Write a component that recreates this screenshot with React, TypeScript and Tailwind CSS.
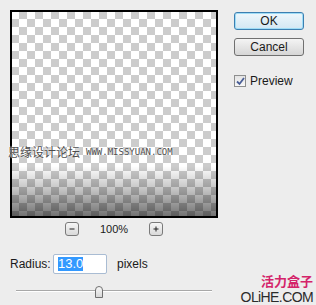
import React from "react";

const ui = { fontFamily: '"Liberation Sans", Arial, sans-serif' };

function SmallButton({ sign }: { sign: "-" | "+" }) {
    return (
        <div className="flex items-center justify-center w-[14px] h-[14px] rounded-[3px] border border-[#7a7a7a] bg-gradient-to-b from-[#f6f6f6] to-[#d9d9d9]">
            <svg width="8" height="8" viewBox="0 0 8 8" aria-hidden="true">
                <path d="M1.5 4h5" stroke="#222" strokeWidth="1" />
                {sign === "+" && <path d="M4 1.5v5" stroke="#222" strokeWidth="1" />}
            </svg>
        </div>
    );
}

export default function App() {
    return (
        <div className="relative w-[316px] h-[305px] overflow-hidden bg-[#ededed] text-[#1a1a1a]" style={ui}>
            <div className="flex">
                {/* left column */}
                <div className="flex flex-col pl-[10px] pt-[10px]">
                    <div className="relative w-[208px] h-[208px] border-2 border-black bg-white bg-[conic-gradient(#cccccc_25%,#ffffff_0_50%,#cccccc_0_75%,#ffffff_0)] bg-[length:16px_16px] bg-[position:-1px_-1px]">
                        <div className="absolute inset-x-0 bottom-0 h-[50px] bg-gradient-to-b from-transparent via-black/25 to-black/55" />
                    </div>

                    <div className="flex w-[208px] items-center justify-center gap-[21px] mt-[4px] h-[14px]">
                        <SmallButton sign="-" />
                        <span className="text-[11px] leading-none">100%</span>
                        <SmallButton sign="+" />
                    </div>

                    <div className="flex items-center h-[20px] mt-[18px]">
                        <span className="text-[12px] w-[43px]">Radius:</span>
                        <div className="flex items-center w-[54px] h-[20px] rounded-[2px] border border-[#a9bcd3] bg-white pl-[4px]">
                            <span className="bg-[#3399ff] text-white text-[13px] leading-[14px]">13.0</span>
                        </div>
                        <span className="text-[12px] ml-[10px]">pixels</span>
                    </div>

                    <div className="relative mt-[12px] ml-[6px] w-[196px] h-[12px]">
                        <div className="absolute left-0 right-0 top-[4px] h-[2px] border-t border-[#a8a8a8] border-b border-b-white" />
                        <svg className="absolute left-[79px] top-0" width="8" height="12" viewBox="0 0 8 12" aria-hidden="true">
                            <defs>
                                <linearGradient id="thumb" x1="0" y1="0" x2="0" y2="1">
                                    <stop offset="0" stopColor="#fafafa" />
                                    <stop offset="1" stopColor="#d6d6d6" />
                                </linearGradient>
                            </defs>
                            <path d="M0.5 11.5V4Q0.5 0.5 4 0.5Q7.5 0.5 7.5 4V11.5Z" fill="url(#thumb)" stroke="#6f6f6f" />
                        </svg>
                    </div>
                </div>

                {/* right column */}
                <div className="flex flex-col ml-[16px] pt-[12px]">
                    <button className="w-[70px] h-[18px] rounded-[3px] border border-[#3c7fb1] bg-gradient-to-b from-[#eef7fc] to-[#d3e7f3] shadow-[inset_0_0_0_1px_#9fdcf6] text-[12px] leading-none">
                        OK
                    </button>
                    <button className="mt-[8px] w-[70px] h-[18px] rounded-[3px] border border-[#707070] bg-gradient-to-b from-[#f4f4f4] to-[#d6d6d6] text-[12px] leading-none">
                        Cancel
                    </button>
                    <label className="flex items-center mt-[16px] gap-[4px]">
                        <span className="flex items-center justify-center w-[12px] h-[12px] border border-[#8e8f8f] bg-gradient-to-b from-[#e4e4e4] to-[#f8f8f8]">
                            <svg width="9" height="9" viewBox="0 0 9 9" aria-hidden="true">
                                <path d="M1 4.5L3.5 7L8 1" fill="none" stroke="#4a5f97" strokeWidth="1.8" />
                            </svg>
                        </span>
                        <span className="text-[12px]">Preview</span>
                    </label>
                </div>
            </div>

            {/* watermark over preview */}
            <div className="absolute left-[8px] top-[146px] flex items-center gap-[6px] text-[#4d4d4d] [text-shadow:0_0_2px_#fff,0_0_1px_#fff]">
                <span className="text-[12px] leading-none" style={{ fontFamily: '"Noto Sans CJK SC", sans-serif' }}>
                    思缘设计论坛
                </span>
                <span className="text-[9px] leading-none" style={{ fontFamily: '"DejaVu Sans Mono", monospace' }}>
                    WWW.MISSYUAN.COM
                </span>
            </div>

            {/* site logo */}
            <div className="absolute right-[3px] top-[274px] flex flex-col items-end leading-none">
                <span className="text-[13px] font-bold text-[#d4246a]" style={{ fontFamily: '"Noto Sans CJK SC", sans-serif' }}>
                    活力盒子
                </span>
                <span className="text-[14px] tracking-[-0.6px] text-[#2b2b2b] mt-[3px]">OLiHE.COM</span>
            </div>
        </div>
    );
}
